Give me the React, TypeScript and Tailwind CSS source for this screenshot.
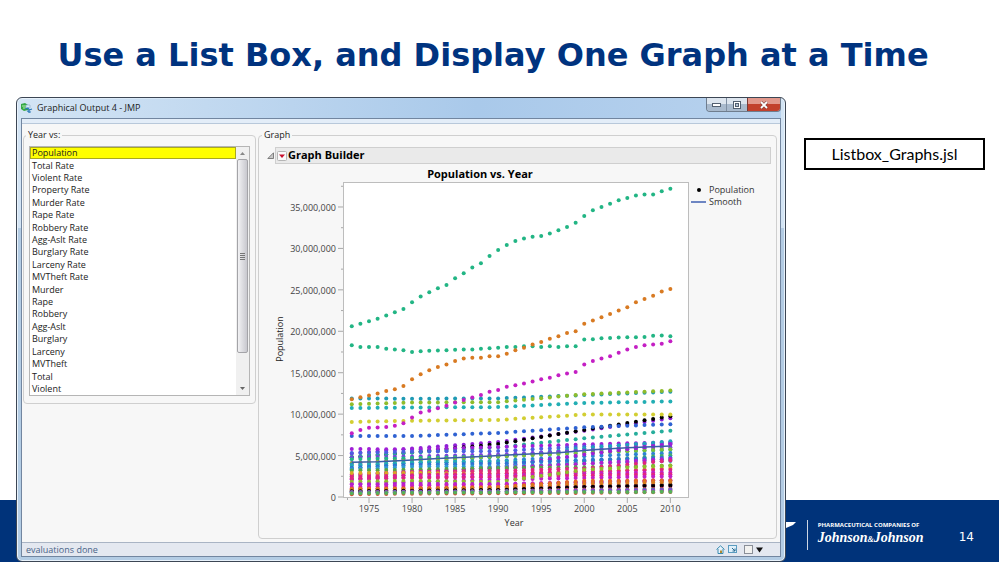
import { useState } from "react";

const COLUMNS = [
  "Population",
  "Total Rate",
  "Violent Rate",
  "Property Rate",
  "Murder Rate",
  "Rape Rate",
  "Robbery Rate",
  "Agg-Aslt Rate",
  "Burglary Rate",
  "Larceny Rate",
  "MVTheft Rate",
  "Murder",
  "Rape",
  "Robbery",
  "Agg-Aslt",
  "Burglary",
  "Larceny",
  "MVTheft",
  "Total",
  "Violent",
];

const FIRST_YEAR = 1973;
const LAST_YEAR = 2010;

// yearly values, in millions
const YEARLY = [
  {
    color: "#22b584",
    values: [
      20.6, 20.9, 21.2, 21.5, 21.9, 22.3, 22.7, 23.5, 24.2, 24.7, 25.2, 25.6, 26.4, 27.0, 27.7, 28.2, 29.1, 29.8, 30.4,
      30.9, 31.2, 31.4, 31.5, 31.8, 32.2, 32.6, 33.1, 33.9, 34.6, 35.0, 35.4, 35.8, 36.1, 36.4, 36.5, 36.5, 36.9, 37.2,
    ],
  },
  {
    color: "#22b584",
    values: [
      18.3, 18.1, 18.1, 18.1, 17.9, 17.8, 17.7, 17.5, 17.6, 17.65, 17.67, 17.7, 17.78, 17.8, 17.8, 17.9, 17.95, 18.0,
      18.1, 18.1, 18.2, 18.2, 18.1, 18.2, 18.1, 18.2, 18.2, 19.0, 19.05, 19.15, 19.2, 19.25, 19.27, 19.28, 19.3, 19.45,
      19.5, 19.4,
    ],
  },
  {
    color: "#d87a22",
    values: [
      11.8, 12.05, 12.25, 12.5, 12.8, 13.0, 13.4, 14.2, 14.8, 15.3, 15.7, 16.0, 16.4, 16.7, 16.8, 16.8, 17.0, 17.0, 17.3,
      17.7, 18.0, 18.4, 18.7, 19.1, 19.4, 19.8, 20.0, 20.9, 21.3, 21.7, 22.1, 22.5, 22.9, 23.5, 23.9, 24.3, 24.8, 25.1,
    ],
  },
  {
    color: "#c41fc4",
    values: [
      7.7, 8.1, 8.35, 8.4, 8.45, 8.6, 8.9, 9.6, 10.2, 10.4, 10.7, 11.0, 11.4, 11.7, 12.0, 12.3, 12.7, 12.9, 13.3, 13.5,
      13.7, 13.95, 14.2, 14.4, 14.7, 14.9, 15.1, 16.0, 16.4, 16.7, 17.0, 17.4, 17.8, 18.1, 18.3, 18.4, 18.5, 18.8,
    ],
  },
];

// values at ANCHORS, straight lines in between
const ANCHORS = [1973, 1980, 1990, 2000, 2010];
const DECADES: [string, number[]][] = [
  ["#1f9ab4", [11.9, 11.86, 11.9, 12.3, 12.7]],
  ["#8fbc2b", [11.2, 11.4, 11.45, 12.4, 12.85]],
  ["#22aeb4", [10.73, 10.8, 10.85, 11.35, 11.53]],
  ["#000000", [4.8, 5.4, 6.4, 8.1, 9.75]],
  ["#d2ce32", [9.06, 9.2, 9.3, 9.95, 9.95]],
  ["#2f62d2", [7.36, 7.36, 7.73, 8.41, 8.79]],
  ["#26ad9c", [4.84, 5.35, 6.0, 7.08, 8.0]],
  ["#a01fd6", [5.8, 5.74, 6.02, 6.35, 6.6]],
  ["#4a5fe0", [5.3, 5.49, 5.54, 6.08, 6.48]],
  ["#b01fd0", [4.1, 4.59, 4.88, 5.69, 6.35]],
  ["#22a0bc", [3.45, 4.13, 4.87, 5.89, 6.72]],
  ["#7a3fe0", [4.76, 4.9, 5.12, 5.6, 5.99]],
  ["#22b584", [4.55, 4.7, 4.89, 5.36, 5.69]],
  ["#7fbf3a", [4.07, 4.4, 4.9, 5.3, 5.77]],
  ["#2f82d2", [3.89, 4.08, 4.38, 4.92, 5.3]],
  ["#22aeb4", [3.76, 4.2, 4.22, 4.47, 4.53]],
  ["#a01fd6", [2.1, 2.72, 3.67, 5.13, 6.39]],
  ["#3fb06a", [2.5, 2.89, 3.29, 4.3, 5.03]],
  ["#2f72d2", [3.54, 3.89, 4.04, 4.45, 4.78]],
  ["#2f9ad2", [3.35, 3.66, 3.69, 4.04, 4.34]],
  ["#b01fd0", [2.73, 3.12, 3.49, 4.01, 4.63]],
  ["#55a545", [3.2, 3.3, 3.5, 3.6, 3.8]],
  ["#e0257f", [2.67, 3.03, 3.15, 3.45, 4.4]],
  ["#d8a822", [2.9, 2.91, 2.78, 2.93, 3.5]],
  ["#e0257f", [2.4, 2.63, 2.84, 3.1, 3.3]],
  ["#c41fc4", [2.1, 2.4, 2.57, 2.84, 2.97]],
  ["#e0257f", [2.27, 2.3, 2.4, 2.6, 2.75]],
  ["#c41fc4", [1.6, 1.8, 2.1, 2.3, 2.5]],
  ["#8fbc2b", [1.85, 1.95, 1.8, 3.3, 3.8]],
  ["#b01fd0", [1.53, 1.57, 1.58, 1.71, 2.0]],
  ["#c41fc4", [1.2, 1.4, 1.52, 1.82, 2.06]],
  ["#000000", [0.77, 0.8, 0.95, 1.29, 1.5]],
  ["#e0257f", [1.03, 1.12, 1.23, 1.3, 1.33]],
  ["#e06a22", [0.98, 1.0, 1.2, 1.95, 2.0]],
  ["#d87a22", [0.95, 1.0, 1.11, 1.6, 1.8]],
  ["#000000", [0.7, 0.75, 0.85, 1.21, 1.36]],
  ["#c43a5a", [0.6, 0.65, 0.7, 0.9, 0.99]],
  ["#3a8fb4", [0.57, 0.6, 0.67, 0.78, 0.9]],
  ["#8f3fd6", [0.55, 0.6, 0.65, 0.75, 0.81]],
  ["#d0503a", [0.33, 0.4, 0.45, 0.5, 0.6]],
  ["#55b05a", [0.46, 0.51, 0.56, 0.61, 0.62]],
];

const PURPLE_STATE = { color: "#8f1fd6", values: [5.25, 5.85, 6.63, 8.0, 9.5] };

const SMOOTH: [number, number][] = [
  [1973, 4.2],
  [1976, 4.25],
  [1979, 4.4],
  [1983, 4.65],
  [1988, 4.9],
  [1993, 5.15],
  [1997, 5.35],
  [2001, 5.7],
  [2005, 5.95],
  [2010, 6.15],
];

const px = (year: number) => 99 + (year - 1975) * 8.61;
const py = (millions: number) => 332 - millions * 8.286;

function interpolate(values: number[], year: number) {
  let i = 0;
  while (i < ANCHORS.length - 2 && year > ANCHORS[i + 1]) i++;
  const t = (year - ANCHORS[i]) / (ANCHORS[i + 1] - ANCHORS[i]);
  return values[i] + (values[i + 1] - values[i]) * t;
}

const YEARS = Array.from({ length: LAST_YEAR - FIRST_YEAR + 1 }, (_, i) => FIRST_YEAR + i);

const SERIES = [
  { color: PURPLE_STATE.color, values: YEARS.map((y) => interpolate(PURPLE_STATE.values, y)) },
  ...DECADES.map(([color, values]) => ({ color, values: YEARS.map((y) => interpolate(values, y)) })),
  ...YEARLY,
];

function Chart() {
  return (
    <svg
      width="420"
      height="366"
      viewBox="0 0 420 366"
      className="ml-[3px] mt-px shrink-0"
      role="img"
      aria-label="Population vs. Year"
    >
      <text x="210" y="13" textAnchor="middle" className="fill-black text-[11px] font-bold">
        Population vs. Year
      </text>
      <rect x="73.5" y="17.5" width="345" height="315" fill="#fff" stroke="#bdbdbd" />

      {[0, 5, 10, 15, 20, 25, 30, 35].map((v) => (
        <g key={v}>
          <line x1="68" x2="73" y1={py(v)} y2={py(v)} stroke="#a8a8a8" />
          <line x1="71" x2="73" y1={py(v + 2.5)} y2={py(v + 2.5)} stroke="#a8a8a8" />
          <text x="66" y={py(v) + 4} textAnchor="end" className="fill-[#444] text-[9px]">
            {(v * 1000000).toLocaleString("en-US")}
          </text>
        </g>
      ))}

      {[1975, 1980, 1985, 1990, 1995, 2000, 2005, 2010].map((year) => (
        <g key={year}>
          <line x1={px(year)} x2={px(year)} y1="333" y2="338" stroke="#a8a8a8" />
          <line x1={px(year - 2.5)} x2={px(year - 2.5)} y1="333" y2="335" stroke="#a8a8a8" />
          <text x={px(year)} y="347" textAnchor="middle" className="fill-[#444] text-[9px]">
            {year}
          </text>
        </g>
      ))}

      {SERIES.map((s, i) => (
        <g key={i} fill={s.color}>
          {s.values.map((v, j) => (
            <circle key={j} cx={px(FIRST_YEAR + j)} cy={py(v)} r="2" />
          ))}
        </g>
      ))}

      <polyline
        points={SMOOTH.map(([year, v]) => `${px(year)},${py(v)}`).join(" ")}
        fill="none"
        stroke="#3c5ea8"
        strokeWidth="1.5"
      />

      <text x="244" y="361" textAnchor="middle" className="fill-[#333] text-[9px]">
        Year
      </text>
      <text transform="translate(13 174) rotate(-90)" textAnchor="middle" className="fill-[#222] text-[9px]">
        Population
      </text>
    </svg>
  );
}

function TitleBar() {
  return (
    <div className="flex h-[20px] items-start">
      <svg width="12" height="12" viewBox="0 0 12 12" className="mt-[4px] shrink-0">
        <path d="M0 2 4 1l3 2v5l-4 1-3-2z" fill="#35a845" />
        <path d="M1 4h4M2 6h3" stroke="#b8f0b0" />
        <path d="M5 3h4v3H5z" fill="#d8eefc" stroke="#88a8c8" strokeWidth=".6" />
        <path d="m4 7 3-1 1 2 3-1M8 8v3M6 9l4 1" stroke="#2878b8" strokeWidth="1.2" fill="none" />
      </svg>
      <span className="ml-1 pt-[3px] text-[9px] leading-[14px] text-[#222]">Graphical Output 4 - JMP</span>
      <div className="ml-auto flex h-[14px] overflow-hidden rounded-b border border-t-0 border-[#6f7d8e]">
        <button
          type="button"
          aria-label="Minimize"
          className="flex w-5 items-center justify-center border-r border-[#7f8fa2] bg-linear-to-b from-[#dde5ee] from-45% to-[#a9bacd] to-50%"
        >
          <svg width="9" height="4" viewBox="0 0 9 4">
            <rect x=".5" y=".5" width="8" height="3" fill="#fff" stroke="#536070" />
          </svg>
        </button>
        <button
          type="button"
          aria-label="Maximize"
          className="flex w-5 items-center justify-center bg-linear-to-b from-[#dde5ee] from-45% to-[#a9bacd] to-50%"
        >
          <svg width="8" height="8" viewBox="0 0 8 8">
            <rect x=".5" y=".5" width="7" height="7" fill="#fff" stroke="#536070" />
            <rect x="2.5" y="2.5" width="3" height="3" fill="#b6c5d6" stroke="#536070" />
          </svg>
        </button>
        <button
          type="button"
          aria-label="Close"
          className="flex w-[33px] items-center justify-center border-l border-[#7a3a35] bg-linear-to-b from-[#e2988c] from-45% to-[#c2402c] to-50%"
        >
          <svg width="8" height="8" viewBox="0 0 8 8">
            <path d="m1 1 6 6M7 1 1 7" stroke="#7a4440" strokeWidth="3" />
            <path d="m1 1 6 6M7 1 1 7" stroke="#fff" strokeWidth="1.8" />
          </svg>
        </button>
      </div>
    </div>
  );
}

function ListBox() {
  const [selected, setSelected] = useState("Population");

  return (
    <fieldset className="h-[275px] w-[233px] shrink-0 rounded-sm border border-[#cfcfcf] px-[5px] pb-2">
      <legend className="ml-[-3px] px-[2px] text-[9px] leading-[12px]">Year vs:</legend>
      <div className="mt-[5px] flex h-[250px] w-[221px] border border-[#b5b5b5] bg-white">
        <div role="listbox" aria-label="Year vs" className="flex flex-1 flex-col">
          {COLUMNS.map((name) => (
            <button
              key={name}
              type="button"
              role="option"
              aria-selected={name === selected}
              onClick={() => setSelected(name)}
              className={`flex flex-1 items-center border pl-px text-left text-[9px] leading-[10px] ${
                name === selected ? "border-[#a8a820] bg-[#ffff00]" : "border-transparent"
              }`}
            >
              {name}
            </button>
          ))}
        </div>
        <div className="flex w-[13px] flex-col items-center bg-[#f0f0f0]">
          <svg width="5" height="12" viewBox="0 0 5 12">
            <path d="M0 8h5L2.500 5z" fill="#888" />
          </svg>
          <div className="flex h-[194px] w-[11px] items-center justify-center rounded-[2px] border border-[#a4a4a8] bg-linear-to-r from-[#f2f2f4] to-[#c8c8ce]">
            <svg width="5" height="7" viewBox="0 0 5 7">
              <path d="M0 .5h5M0 2.500h5M0 4.500h5M0 6.500h5" stroke="#777" />
            </svg>
          </div>
          <svg width="5" height="12" viewBox="0 0 5 12" className="mt-auto">
            <path d="M0 4h5L2.500 7z" fill="#666" />
          </svg>
        </div>
      </div>
    </fieldset>
  );
}

function GraphPanel() {
  return (
    <fieldset className="min-w-0 flex-1 rounded-sm border border-[#cfcfcf] pl-2 pr-[5px]">
      <legend className="ml-[-5px] px-[2px] text-[9px] leading-[12px]">Graph</legend>
      <div className="mt-[6px] flex items-center">
        <svg width="8" height="8" viewBox="0 0 8 8" className="shrink-0">
          <path d="M.8 6.500 6.500.8v5.700z" fill="#c8c8c8" stroke="#666" strokeWidth=".8" />
        </svg>
        <h2 className="flex h-[17px] flex-1 items-center border border-[#cfcfcf] bg-[#eaeaea] pl-px text-[11px] font-bold text-black">
          <svg width="10" height="10" viewBox="0 0 10 10" className="mr-px">
            <rect x=".5" y=".5" width="9" height="9" rx="1" fill="#fafafa" stroke="#b5b5b5" />
            <path d="M2 3.500h6L5 7z" fill="#c8102e" />
          </svg>
          Graph Builder
        </h2>
      </div>
      <div className="flex">
        <Chart />
        <ul className="ml-[1px] mt-[20px] text-[9px] leading-[12px] text-[#333]">
          <li className="flex items-center">
            <svg width="15" height="6" viewBox="0 0 15 6" className="mr-[3px]">
              <circle cx="8" cy="3" r="2" />
            </svg>
            Population
          </li>
          <li className="flex items-center">
            <svg width="15" height="6" viewBox="0 0 15 6" className="mr-[3px]">
              <path d="M0 3h15" stroke="#3f5fb0" strokeWidth="1.500" />
            </svg>
            Smooth
          </li>
        </ul>
      </div>
    </fieldset>
  );
}

function StatusBar() {
  return (
    <div className="flex h-[14px] items-center border-t border-[#a9b4c4] bg-[#e4e8f0] pl-1 pr-[17px] text-[9px] leading-[12px] text-[#4a6488]">
      <span>evaluations done</span>
      <div className="ml-auto flex items-center gap-[3px]">
        <svg width="9" height="9" viewBox="0 0 9 9">
          <path d="M.5 4.500 4.500.8l4 3.700M2 4v4.500h5V4" fill="#e8f4fc" stroke="#3a8ab0" />
          <path d="M4 5.500h2V8H4z" fill="#b08a30" />
        </svg>
        <svg width="9" height="9" viewBox="0 0 9 9">
          <rect x=".5" y=".5" width="8" height="7" fill="#dff0fa" stroke="#5a9cc0" />
          <path d="m4 3 3 3M7 3.500V6H4.500" stroke="#2a6a90" fill="none" />
        </svg>
        <input
          type="checkbox"
          aria-label="Select window"
          className="ml-1 size-[9px] appearance-none border border-[#8a8f98] bg-[#f2f2f0]"
        />
        <svg width="7" height="6" viewBox="0 0 7 6">
          <path d="M0 .5h7l-3.500 5z" fill="#111" />
        </svg>
      </div>
    </div>
  );
}

export default function App() {
  return (
    <div className="relative flex min-h-screen flex-col bg-white font-['Open_Sans','Noto_Sans',sans-serif] text-[#222]">
      <footer className="absolute inset-x-0 bottom-0 flex h-[62px] items-center justify-end bg-[#00337a] pr-[25px] pt-2 text-white">
        <svg width="10" height="6" viewBox="0 0 10 6" className="mb-5">
          <path d="M0 0h10L7 3 0 6z" fill="#fff" />
        </svg>
        <div className="ml-[11px] h-[30px] w-px bg-white/80" />
        <div className="ml-[10px] w-[106px] whitespace-nowrap">
          <div className="text-[6px] font-bold leading-[8px]">PHARMACEUTICAL COMPANIES OF</div>
          <div className="font-['Liberation_Serif',serif] text-[14px] font-bold italic leading-[18px]">
            Johnson<span className="text-[8px]">&amp;</span>Johnson
          </div>
        </div>
        <div className="ml-[35px] pt-1 font-['DejaVu_Sans',sans-serif] text-[12px]">14</div>
      </footer>

      <h1 className="flex h-[97px] items-center justify-center pr-[13px] pt-3 text-center font-['DejaVu_Sans',sans-serif] text-[32px] font-bold leading-[40px] text-[#00337f]">
        Use a List Box, and Display One Graph at a Time
      </h1>

      <main className="relative flex flex-1 items-stretch gap-[18px] pl-4 pr-[14px]">
        <section className="flex min-w-0 flex-1 flex-col rounded-md border border-[#3c4654] bg-linear-to-b from-[#d3e4f4] from-28% to-[#b3cce4] to-28% px-[4px] pb-[4px] shadow-[inset_0_0_0_1px_#e8f2fb]">
          <div className="bg-linear-to-r from-transparent via-[#a9c9ea] via-60% to-[#b8d2ee]">
            <TitleBar />
          </div>
          <div className="flex flex-1 flex-col border border-[#7286a0] bg-[#f7f7f7]">
            <div className="h-[5px] border-b border-[#b8c8da] bg-[#e3edf8]" />
            <div className="flex flex-1 items-start gap-[2px] pb-[3px] pl-px pr-[3px] pt-[5px]">
              <ListBox />
              <div className="flex flex-1 self-stretch">
                <GraphPanel />
              </div>
            </div>
            <StatusBar />
          </div>
        </section>

        <aside className="mt-[41px] flex h-[32px] w-[181px] shrink-0 items-center justify-center self-start border-2 border-black bg-white font-['Lato',sans-serif] text-[16px] text-black">
          Listbox_Graphs.jsl
        </aside>
      </main>
    </div>
  );
}
